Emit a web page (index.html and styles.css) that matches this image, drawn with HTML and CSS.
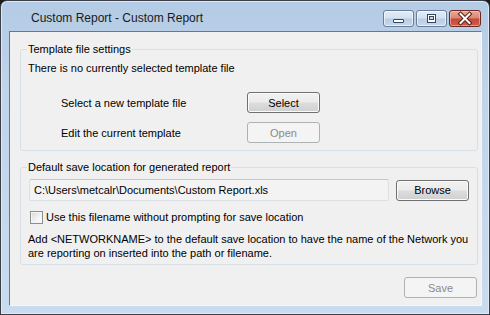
FILE: index.html
```html
<!DOCTYPE html>
<html lang="en">
<head>
    <meta charset="UTF-8">
    <title>Custom Report - Custom Report</title>
    <link rel="stylesheet" href="styles.css">
</head>
<body>
    <div class="window">
        <div class="titlebar">
            <span class="title">Custom Report - Custom Report</span>
            <div class="captionButtons">
                <span class="capBtn">
                    <svg width="29" height="15" viewBox="0 0 29 15"><rect x="9.5" y="8.5" width="10" height="3" rx="0.5" fill="#fff" stroke="#34465c"/></svg>
                </span>
                <span class="capBtn">
                    <svg width="29" height="15" viewBox="0 0 29 15"><rect x="10.5" y="3.5" width="8" height="8" fill="#fff" stroke="#34465c"/><rect x="12.5" y="5.5" width="4" height="3" fill="#c9d8ea" stroke="#34465c"/></svg>
                </span>
                <span class="capBtn close">
                    <svg width="30" height="15" viewBox="0 0 30 15"><path d="M10.5 3 L19.5 12 M19.5 3 L10.5 12" stroke="#5a1c14" stroke-width="4" stroke-linecap="square"/><path d="M10.5 3 L19.5 12 M19.5 3 L10.5 12" stroke="#fff" stroke-width="2" stroke-linecap="square"/></svg>
                </span>
            </div>
        </div>
        <div class="client">
            <fieldset class="group groupTemplate">
                <legend>Template file settings</legend>
                <div class="note">There is no currently selected template file</div>
                <div class="row firstRow">
                    <span class="label">Select a new template file</span>
                    <button class="btn">Select</button>
                </div>
                <div class="row secondRow">
                    <span class="label">Edit the current template</span>
                    <button class="btn" disabled>Open</button>
                </div>
            </fieldset>
            <fieldset class="group groupSave">
                <legend>Default save location for generated report</legend>
                <div class="pathRow">
                    <input type="text" class="pathBox" value="C:\Users\metcalr\Documents\Custom Report.xls" readonly>
                    <button class="btn">Browse</button>
                </div>
                <label class="checkRow">
                    <input type="checkbox" class="check">
                    <span>Use this filename without prompting for save location</span>
                </label>
                <div class="hint">Add &lt;NETWORKNAME&gt; to the default save location to have the name of the Network you<br>are reporting on inserted into the path or filename.</div>
            </fieldset>
            <div class="footer">
                <button class="btn" disabled>Save</button>
            </div>
        </div>
    </div>
</body>
</html>
```

FILE: styles.css
```css
html, body {
    margin: 0;
    padding: 0;
}
body {
    width: 490px;
    height: 315px;
    background: #1c1c1c;
    font-family: "Liberation Sans", Arial, sans-serif;
    font-size: 11px;
    color: #000;
}
.window {
    box-sizing: border-box;
    width: 490px;
    height: 315px;
    border: 1px solid #3b3f45;
    border-radius: 7px 7px 0 0;
    background: linear-gradient(180deg, #b4cbe5 0%, #c0d4ea 30%, #c9dbee 100%);
    box-shadow: inset 0 0 0 1px #dfeaf6;
    display: flex;
    flex-direction: column;
}
.titlebar {
    height: 30px;
    display: flex;
    justify-content: space-between;
    padding-right: 8px;
}
.title {
    padding-left: 30px;
    padding-top: 10px;
    font-size: 12px;
    line-height: 14px;
    color: #1a1a1a;
}
.captionButtons {
    display: flex;
    gap: 2px;
    margin-top: 9px;
}
.capBtn {
    width: 29px;
    height: 15px;
    border: 1px solid #687d99;
    border-radius: 3px;
    background: linear-gradient(180deg, #e3ecf7 0%, #d4e1f1 48%, #b9cde4 52%, #c6d8ec 100%);
    box-shadow: inset 0 0 0 1px rgba(255, 255, 255, 0.6);
    display: flex;
}
.capBtn.close {
    width: 30px;
    border-color: #6e2a22;
    background: linear-gradient(180deg, #e9a898 0%, #d98673 48%, #c44a36 52%, #cd5e4c 100%);
    box-shadow: inset 0 0 0 1px rgba(255, 210, 200, 0.5);
}
.client {
    flex: 1;
    margin: 0 7px 8px 8px;
    border-top: 1px solid #6b7785;
    border-left: 1px solid #6b7785;
    border-right: 1px solid #f4f7fa;
    border-bottom: 1px solid #f4f7fa;
    background: #f0f0f0;
    padding: 10px 3px 0 10px;
    display: flex;
    flex-direction: column;
}
.group {
    margin: 0;
    padding: 0 7px;
    min-inline-size: 0;
    border: 1px solid #d5dfe5;
    border-radius: 3px;
}
.group legend {
    padding: 0 1px;
    margin-left: -1px;
    line-height: 14px;
}
.groupTemplate {
    padding-bottom: 7px;
}
.groupSave {
    margin-top: 9px;
    padding-bottom: 4px;
}
.note {
    margin-top: 5px;
    line-height: 14px;
}
.row {
    display: flex;
    align-items: center;
}
.firstRow {
    margin-top: 17px;
}
.secondRow {
    margin-top: 9px;
}
.label {
    width: 186px;
    padding-left: 33px;
    line-height: 14px;
}
.btn {
    box-sizing: border-box;
    width: 73px;
    height: 21px;
    padding: 0;
    font-family: "Liberation Sans", Arial, sans-serif;
    font-size: 11px;
    color: #000;
    border: 1px solid #707070;
    border-radius: 3px;
    background: linear-gradient(180deg, #f2f2f2 0%, #ebebeb 48%, #dddddd 52%, #cfcfcf 100%);
    box-shadow: inset 0 0 0 1px #fbfbfb;
}
.btn:disabled {
    color: #8a8a8a;
    border-color: #adb2b5;
    background: #f4f4f4;
    box-shadow: none;
}
.pathRow {
    display: flex;
    align-items: center;
    margin-top: 5px;
}
.pathBox {
    box-sizing: border-box;
    width: 360px;
    height: 22px;
    margin: 0 7px 0 1px;
    padding: 0 4px;
    font-family: "Liberation Sans", Arial, sans-serif;
    font-size: 11px;
    color: #000;
    background: #f3f3f3;
    border: 1px solid #dcdfe3;
    border-top-color: #c2c6cc;
    border-radius: 2px;
    outline: none;
}
.checkRow {
    display: flex;
    align-items: center;
    margin-top: 9px;
    line-height: 14px;
}
.check {
    appearance: none;
    box-sizing: border-box;
    width: 13px;
    height: 13px;
    margin: 0 3px 0 2px;
    border: 1px solid #8e8f8f;
    background: linear-gradient(135deg, #d8d8d8 0%, #f4f4f4 60%, #ffffff 100%);
    box-shadow: inset 0 0 0 1px #f4f4f4;
}
.hint {
    margin-top: 8px;
    line-height: 14px;
}
.footer {
    display: flex;
    justify-content: flex-end;
    margin-top: 12px;
    padding-right: 1px;
}
```
